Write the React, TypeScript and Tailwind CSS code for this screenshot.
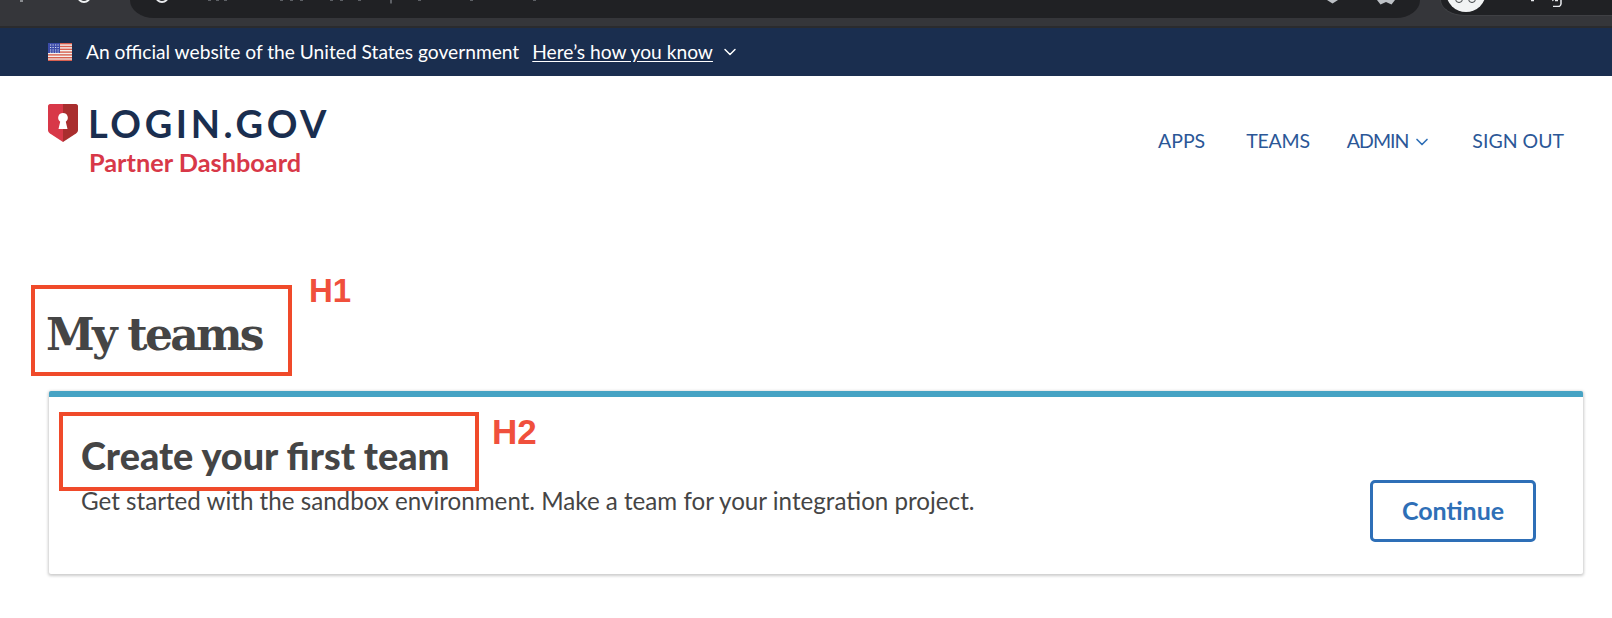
import React from "react";
import { ChevronDown } from "lucide-react";

const sans = "font-['Lato','Liberation_Sans',sans-serif]";

const Flag = () => (
  <svg width="24" height="18" viewBox="0 0 24 18" className="shrink-0">
    <rect width="24" height="18" fill="#f4f1ee" />
    {[0, 2.8, 5.6, 8.4, 11.2, 14, 16.6].map((y) => (
      <rect key={y} y={y} width="24" height="1.4" fill="#d8604f" />
    ))}
    <rect width="12" height="10" fill="#3b4ba8" />
    {[1.5, 4, 6.5, 8.6].map((y) =>
      [2, 4.5, 7, 9.5].map((x) => (
        <rect key={`${x}-${y}`} x={x} y={y} width="1.2" height="1" fill="#d9def2" />
      ))
    )}
  </svg>
);

const Shield = () => (
  <svg width="30" height="38" viewBox="0 0 30 38" className="shrink-0">
    <path d="M2 0h13v38L2 29.500C.8 28.700 0 27.500 0 26V2C0 1 1 0 2 0z" fill="#d83848" />
    <path d="M15 0h13c1 0 2 1 2 2v24c0 1.500-.8 2.700-2 3.500L15 38z" fill="#a92e2e" />
    <path d="M15 9a4.800 4.800 0 0 1 2.800 8.700L19.500 25h-9l1.700-7.300A4.800 4.800 0 0 1 15 9z" fill="#fff" />
  </svg>
);

const ChromeBar = () => (
  <div className="flex h-7 bg-[#35363a] border-b-2 border-[#2a2b2e]">
    <div className="relative w-[130px] shrink-0">
      <span className="absolute left-[20px] top-0 h-[2px] w-[3px] bg-[#8a8c90]" />
      <span className="absolute left-[77px] -top-[11px] h-[14px] w-[14px] rounded-full border-2 border-[#f1f3f4]" />
    </div>
    <div className="relative h-[18px] flex-1 rounded-br-[24px_18px] rounded-bl-[24px_18px] bg-[#202124]">
      <span className="absolute left-[25px] -top-[11px] h-[14px] w-[14px] rounded-full border-2 border-[#e8eaed]" />
      <svg width="330" height="4" viewBox="0 0 330 4" className="absolute left-[78px] top-0 opacity-50" fill="#9aa0a6">
        {[0, 8, 16, 72, 82, 92, 122, 132, 150, 210, 262, 325].map((x) => (
          <rect key={x} x={x} y="0" width="3" height="1" />
        ))}
        <rect x="182" y="0" width="2" height="3.500" />
      </svg>
      <svg width="18" height="5" viewBox="0 0 18 5" className="absolute right-[25px] top-0">
        <path d="M0 0h18l-3.500 4.500L9 2 3.500 4.500z" fill="#bdc1c6" />
      </svg>
      <svg width="11" height="4" viewBox="0 0 11 4" className="absolute right-[82px] top-0">
        <path d="M0 0l5.500 3.500L11 0z" fill="#bdc1c6" />
      </svg>
    </div>
    <div className="w-[20px] shrink-0" />
    <div className="relative h-[16px] w-[172px] shrink-0 rounded-bl-[24px_16px] border-b border-l border-[#3f4044] bg-[#202124]">
      <span className="absolute left-[5px] -top-[28px] h-[40px] w-[40px] rounded-full bg-[#f1f3f4]" />
      <span className="absolute left-[14px] -top-[5px] h-[8px] w-[8px] rounded-full border border-[#3c4043]" />
      <span className="absolute left-[27px] -top-[5px] h-[8px] w-[8px] rounded-full border border-[#3c4043]" />
      <svg width="70" height="7" viewBox="0 0 70 7" className="absolute left-[90px] top-0">
        <path d="M0 .5h3M24 .5h3M30 0v4a3 3 0 0 1-3 2.500H22M22 0a3 3 0 0 0 0 1" stroke="#e8eaed" strokeWidth="1.500" fill="none" />
      </svg>
    </div>
  </div>
);

const App = () => {
  return (
    <div className={`h-[618px] overflow-hidden bg-white ${sans}`}>
      <ChromeBar />

      <div className="flex h-[48px] items-center gap-[14px] bg-[#1a2e4f] pl-[48px] text-[19.2px] text-white">
        <Flag />
        <div className="flex items-center">
          <span>An official website of the United States government</span>
          <span className="ml-[13px] underline underline-offset-2">Here’s how you know</span>
          <ChevronDown className="ml-[7px] mt-[1px]" size={20} strokeWidth={1.75} />
        </div>
      </div>

      <header className="flex items-start justify-between pl-[48px] pr-[48px] pt-[28px]">
        <div>
          <div className="flex items-center gap-[10px]">
            <Shield />
            <span className="text-[38px] font-bold leading-[38px] tracking-[3.6px] text-[#1a2e4f]">LOGIN.GOV</span>
          </div>
          <div className="ml-[41px] mt-[6px] text-[25.3px] font-bold leading-[28px] text-[#d83848]">Partner Dashboard</div>
        </div>
        <nav className="mt-[25px] flex items-center text-[19.5px] leading-[24px] text-[#2b5797]">
          <a>APPS</a>
          <a className="ml-[41px] tracking-[-0.2px]">TEAMS</a>
          <a className="ml-[37px] tracking-[-1px]">ADMIN</a>
          <ChevronDown className="ml-[4px] mt-[2px] text-[#2e6fb7]" size={20} strokeWidth={2} />
          <a className="ml-[40px]">SIGN OUT</a>
        </nav>
      </header>

      <main className="pl-[49px] pr-[29px] pt-[127px]">
        <div className="relative">
          <h1 className="-ml-[3px] font-['DejaVu_Serif',serif] text-[44px] font-bold leading-[64px] tracking-[-2.75px] text-[#454545]">
            My teams
          </h1>
          <span className="pointer-events-none absolute -left-[18px] -top-[18px] h-[91px] w-[261px] border-[4px] border-[#f04a2a]" />
          <span className="absolute left-[260px] -top-[31px] font-['Liberation_Sans',sans-serif] text-[33px] font-bold leading-[38px] text-[#f0503c]">
            H1
          </span>
        </div>

        <section className="mt-[24px] flex h-[183px] items-end justify-between rounded-[2px] border-t-[6px] border-[#46a3c4] bg-white pb-[32px] pl-[32px] pr-[47px] shadow-[0_1px_3px_1px_rgba(0,0,0,0.2)]">
          <div className="relative self-start pt-[35px]">
            <h2 className="text-[37.8px] font-black leading-[48px] text-[#454545]">Create your first team</h2>
            <p className="mt-[7px] text-[24.17px] leading-[28px] text-[#454545]">
              Get started with the sandbox environment. Make a team for your integration project.
            </p>
            <span className="pointer-events-none absolute -left-[22px] top-[15px] h-[79px] w-[420px] border-[4px] border-[#f04a2a]" />
            <span className="absolute left-[411px] top-[16px] font-['Liberation_Sans',sans-serif] text-[35px] font-bold leading-[38px] text-[#f0503c]">
              H2
            </span>
          </div>
          <button className="h-[62px] w-[166px] rounded-[5px] border-[3px] border-[#2e6fb7] text-[25px] font-bold text-[#2e6fb7]">
            Continue
          </button>
        </section>
      </main>
    </div>
  );
};

export default App;
